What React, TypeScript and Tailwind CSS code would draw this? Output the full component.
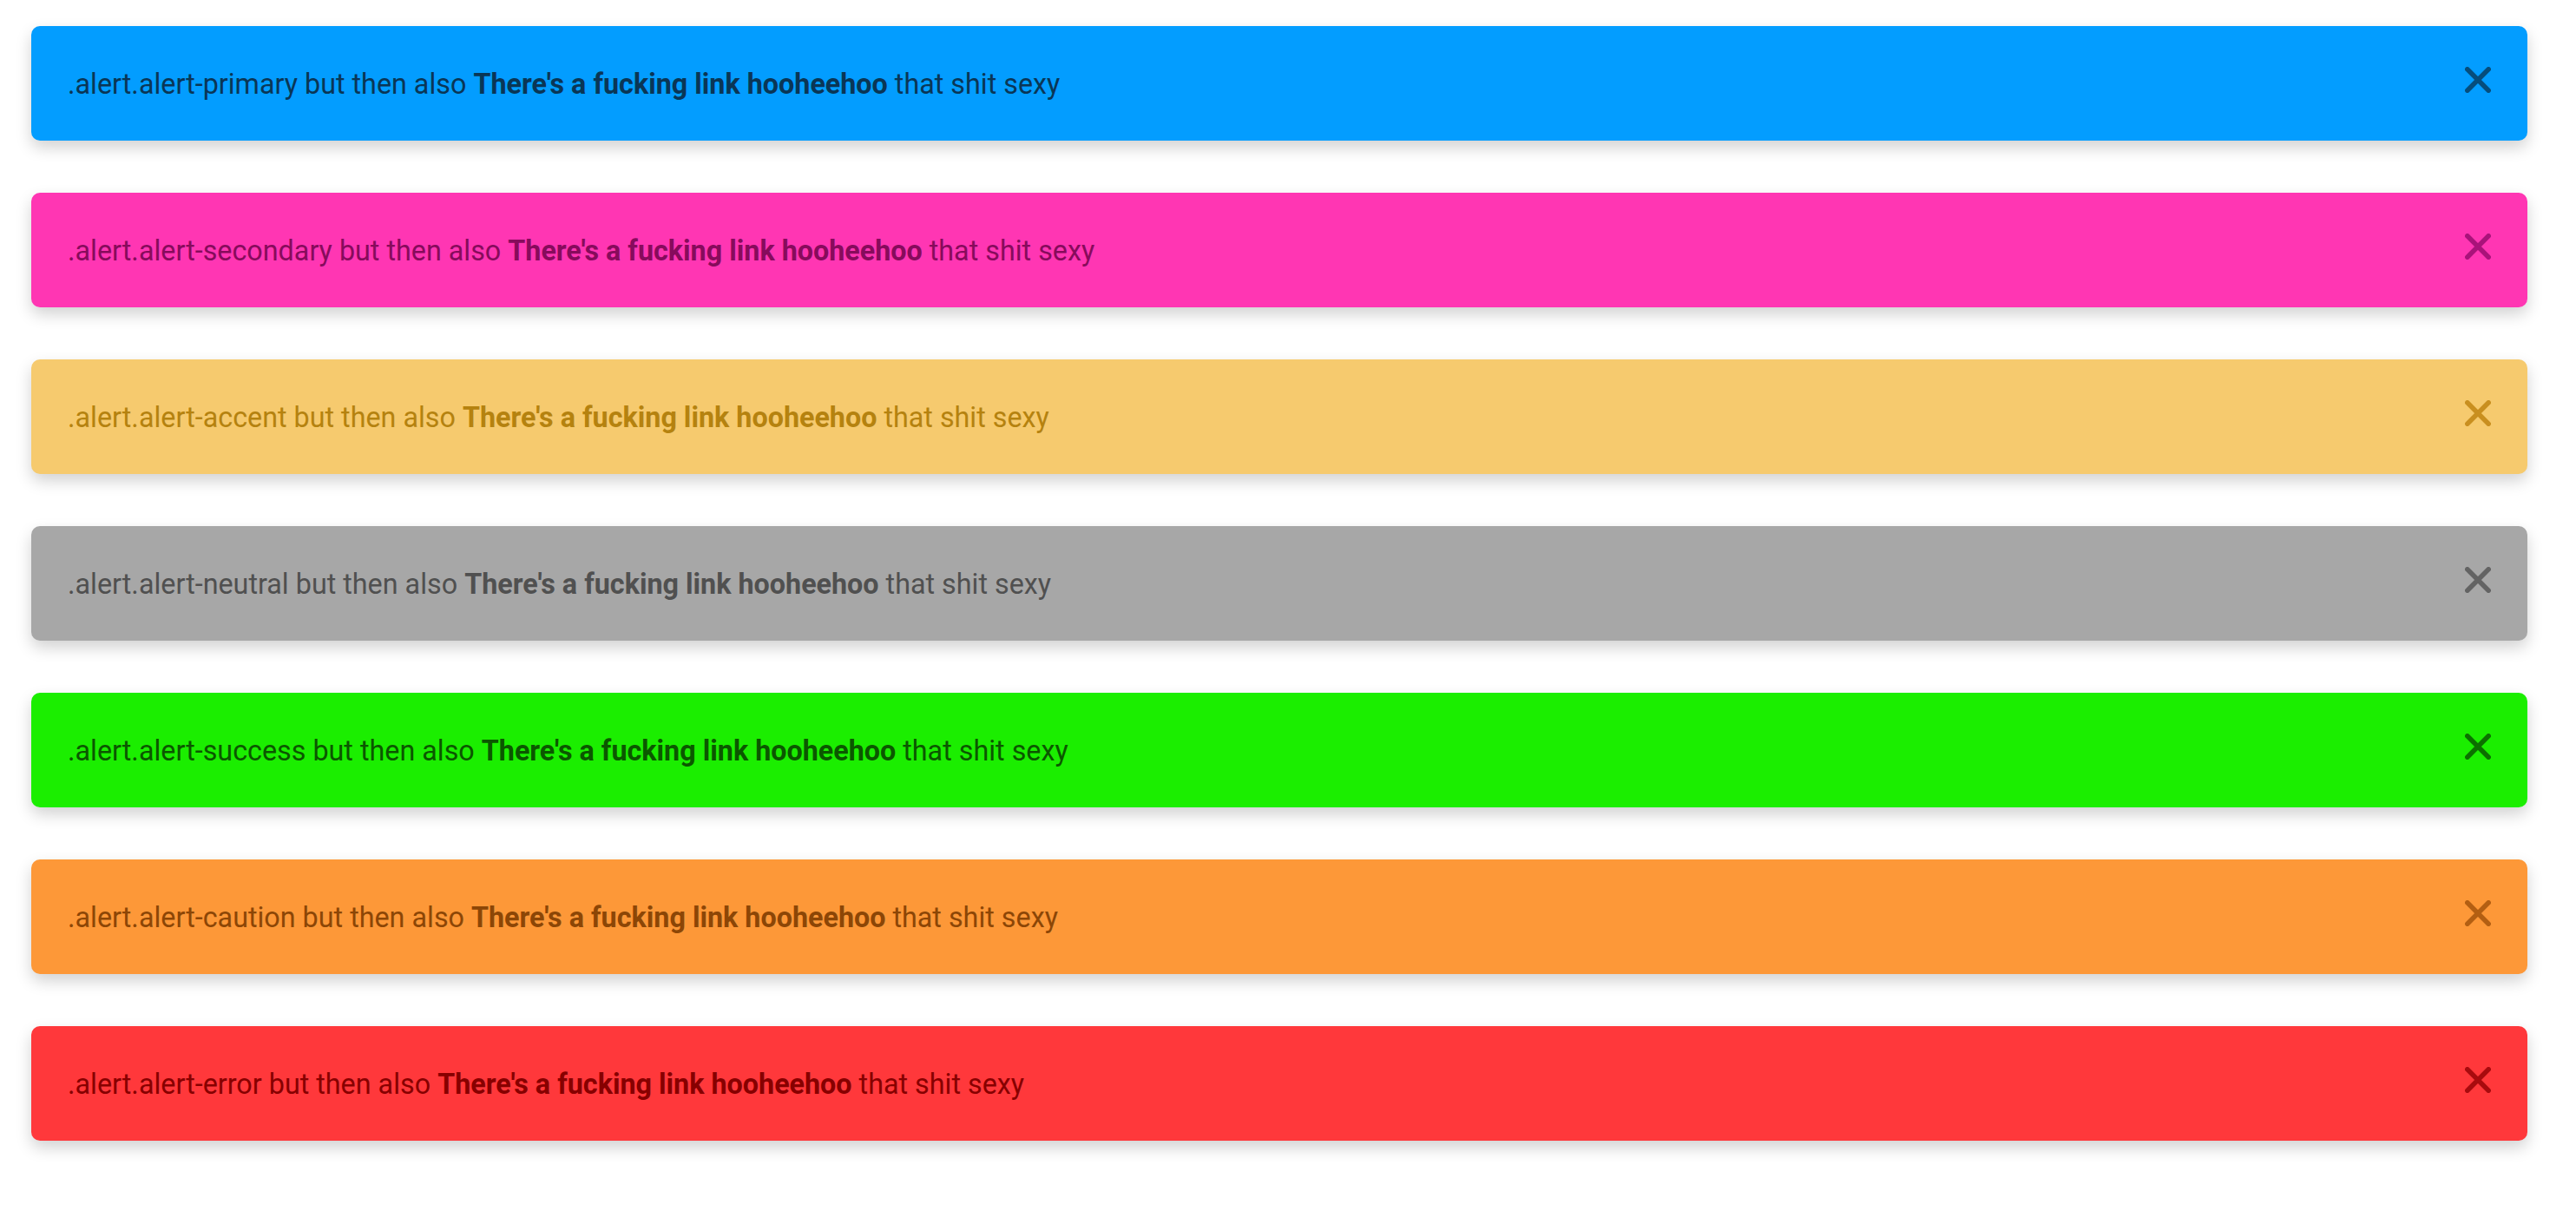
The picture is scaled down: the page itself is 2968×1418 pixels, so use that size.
import React from 'react';

type Variant = {
  name: string;
  bg: string;
  text: string;
  icon: string;
};

const variants: Variant[] = [
  { name: 'primary', bg: 'bg-[#039dff]', text: 'text-[#0a3656]', icon: 'text-[#064d7c]' },
  { name: 'secondary', bg: 'bg-[#ff36b3]', text: 'text-[#870b5c]', icon: 'text-[#a9137a]' },
  { name: 'accent', bg: 'bg-[#f6ca6e]', text: 'text-[#b5820f]', icon: 'text-[#c98f1f]' },
  { name: 'neutral', bg: 'bg-[#a7a7a7]', text: 'text-[#505050]', icon: 'text-[#636363]' },
  { name: 'success', bg: 'bg-[#1bee00]', text: 'text-[#0b5700]', icon: 'text-[#0c7000]' },
  { name: 'caution', bg: 'bg-[#fd9838]', text: 'text-[#8c4606]', icon: 'text-[#b35f12]' },
  { name: 'error', bg: 'bg-[#ff383b]', text: 'text-[#870000]', icon: 'text-[#a80b0e]' },
];

function CloseIcon({ className }: { className: string }) {
  return (
    <svg width="30" height="30" viewBox="0 0 30 30" className={className} fill="none">
      <path d="M2.8 2.8 27.2 27.2M27.2 2.8 2.8 27.2" stroke="currentColor" strokeWidth="5.5" strokeLinecap="round" />
    </svg>
  );
}

function Alert({ variant }: { variant: Variant }) {
  return (
    <div
      className={`flex h-[132px] items-center justify-between rounded-[10px] pl-[42px] pr-[42px] shadow-[0_8px_18px_rgba(0,0,0,0.18)] ${variant.bg}`}
    >
      <p className={`mt-[3px] text-[32.3px] leading-none ${variant.text}`}>
        .alert.alert-{variant.name} but then also <strong className="font-bold">There's a fucking link hooheehoo</strong> that shit sexy
      </p>
      <button className="mb-2 flex items-center justify-center">
        <CloseIcon className={variant.icon} />
      </button>
    </div>
  );
}

export default function App() {
  return (
    <div className="min-h-screen bg-white pt-[30px] pl-[36px] pr-[56px] font-['Roboto',sans-serif]">
      <div className="flex flex-col gap-[60px]">
        {variants.map(v => (
          <Alert key={v.name} variant={v} />
        ))}
      </div>
    </div>
  );
}
